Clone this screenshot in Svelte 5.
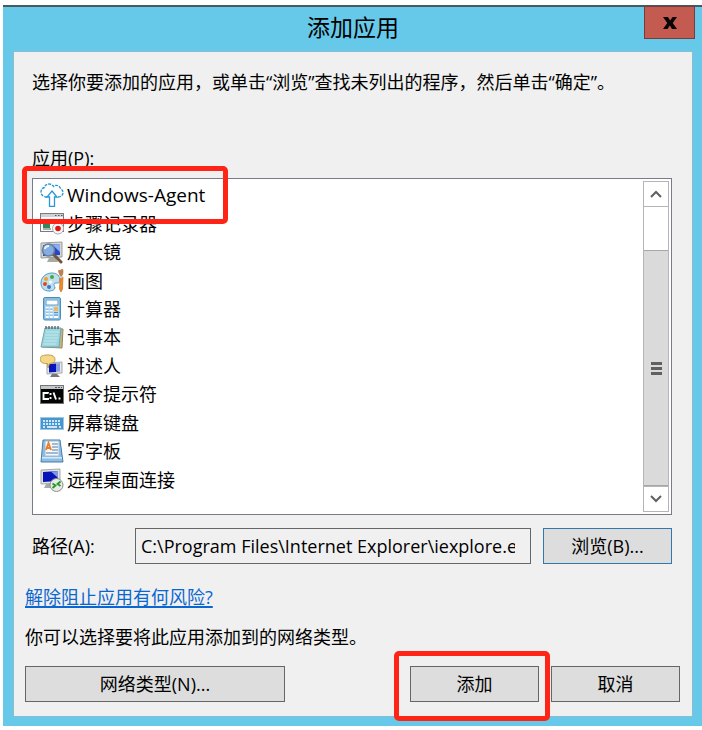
<script lang="ts">
  let apps = [
    { id: 'agent', name: 'Windows-Agent' },
    { id: 'recorder', name: '步骤记录器' },
    { id: 'magnifier', name: '放大镜' },
    { id: 'paint', name: '画图' },
    { id: 'calculator', name: '计算器' },
    { id: 'notepad', name: '记事本' },
    { id: 'narrator', name: '讲述人' },
    { id: 'cmd', name: '命令提示符' },
    { id: 'keyboard', name: '屏幕键盘' },
    { id: 'wordpad', name: '写字板' },
    { id: 'remote', name: '远程桌面连接' }
  ];
  let path: string = 'C:\\Program Files\\Internet Explorer\\iexplore.exe';
  let appList: HTMLElement;

  function scrollApps(amount: number) {
    appList.scrollBy(0, amount);
  }
</script>

<div class="dialog">
  <header class="title-bar">
    <h1>添加应用</h1>
    <button class="close-btn" aria-label="关闭">
      <svg width="16" height="14" viewBox="0 0 16 14">
        <path d="M1 1h5l2.2 3.5L10.500 1H15l-4.300 6L15 13h-5L7.800 9.500 5.500 13H1l4.300-6z" fill="#0a0505" />
      </svg>
    </button>
  </header>

  <main class="panel">
    <section class="fields">
      <p class="intro">选择你要添加的应用，或单击“浏览”查找未列出的程序，然后单击“确定”。</p>

      <h2 id="apps-label">应用(P):</h2>
      <div class="list-box">
        <ul class="apps" aria-labelledby="apps-label" bind:this={appList}>
          {#each apps as app}
            <li class:latin={app.id === 'agent'}>
              <svg width="24" height="24" viewBox="0 0 24 24" aria-hidden="true">
                {#if app.id === 'agent'}
                  <path d="M7 14H5.500C3 13.500 1 11.500 1 9c0-2.500 1.500-4 3.500-4.500C5 2 7 1 9 1c2 0 3.500 1 4.500 2.500C15 2 17 2 18.500 3S20 5 21 6c1.500 1 2 2 2 3.500C23 12 21 14 18.500 14H17" fill="none" stroke="#2795d5" stroke-width="1.300" stroke-dasharray="3 1" />
                  <path d="M12 8l5 6h-2.500v9.300h-5V14H7z" fill="#fff" stroke="#2a98d6" stroke-width="1.300" />
                {:else if app.id === 'recorder'}
                  <rect x=".5" y="1.500" width="23" height="18" fill="#fafafa" stroke="#777c80" />
                  <path d="M1 2h22v3H1z" fill="#cdd2d5" />
                  <path d="M15 3.500h1.500M18 3.500h1.500M21 3.500h1.500" stroke="#555" />
                  <path d="M3 10h7v6H3z" fill="#318957" />
                  <path d="M3 17h8M12 9h8" stroke="#aab1b5" stroke-width="2" />
                  <circle cx="18" cy="16.500" r="5.500" fill="#f8f8f8" stroke="#aaa" />
                  <circle cx="18" cy="16.500" r="2.800" fill="#e01212" />
                {:else if app.id === 'magnifier'}
                  <path d="M1 3l21-1v15L1 18z" fill="#d3d5d3" stroke="#999d9d" />
                  <path d="M3 5l17-1v11L3 16z" fill="#2346cb" />
                  <path d="M12 4.500l8-.5v8z" fill="#91abef" />
                  <path d="M9 18h7l2 4H7z" fill="#aaa99f" />
                  <path d="M13 14l8 8" stroke="#715440" stroke-width="3" stroke-linecap="round" />
                  <circle cx="8.500" cy="10" r="6" fill="#94bfe8" fill-opacity=".85" stroke="#6a7f98" stroke-width="1.500" />
                  <path d="M5 9c0-2 2-3 4-3" fill="none" stroke="#e4f3ff" stroke-width="2" />
                {:else if app.id === 'paint'}
                  <path d="M1 14C1 8 6 4 12 4c5 0 8 3 8 7 0 3-2 3-4 3-3 0-2 3-1 4 0 3-3 4-6 4-5 0-8-3-8-8z" fill="#bfdfef" stroke="#529bc0" />
                  <circle cx="6" cy="10" r="2" fill="#f6a21b" />
                  <circle cx="12" cy="8" r="2" fill="#45a93b" />
                  <circle cx="5" cy="15" r="2" fill="#d94830" />
                  <circle cx="9" cy="18" r="2" fill="#3c75c2" />
                  <circle cx="10.500" cy="13" r="1.500" fill="#fff" />
                  <path d="M20 8h3l-.5 12-1.500 3-1.500-3z" fill="#ef8b21" stroke="#bd651b" stroke-width=".6" />
                  <path d="M18 1c2 1 2-1 5-1 1 3 0 6-1 7h-2c-1-2-2-4-2-6z" fill="#bf8150" />
                  <path d="M19.500 7h3v2h-3z" fill="#cad0d2" />
                {:else if app.id === 'calculator'}
                  <rect x="3.500" y=".5" width="17" height="22.500" rx="1.500" fill="#83bce3" stroke="#4b8ebc" />
                  <rect x="5" y="2" width="14" height="19" fill="#b6dcf3" />
                  <rect x="6" y="3" width="12" height="5" fill="#fff" stroke="#639dc4" />
                  <path d="M6 11h2.500M10 11h2.500M6 14h2.500M10 14h2.500M6 17h2.500M10 17h2.500M6 20h2.500M10 20h2.500M14 20h4" stroke="#fff" stroke-width="2" />
                  <path d="M6 12h2.500M10 12h2.500M6 15h2.500M10 15h2.500M6 18h2.500M10 18h2.500" stroke="#4f91c5" stroke-width=".7" />
                  <path d="M14 10h4v4h-4z" fill="#f4b45c" />
                  <path d="M14 15.500h4M14 18h4" stroke="#4f91c5" />
                {:else if app.id === 'notepad'}
                  <path d="M6 3l17 1-1 19-20-1z" fill="#c8b37b" stroke="#91886a" />
                  <path d="M5 3h16l-2 19H1z" fill="#9bd5de" stroke="#6aaab5" />
                  <path d="M6 7h13M5 10h13M5 13h13M4 16h13M3 19h13" stroke="#c4e8ed" />
                  <path d="M6 4V1M9 4V1M12 4V1M15 4V1M18 4V1" stroke="#555e60" stroke-width="1.300" />
                {:else if app.id === 'narrator'}
                  <path d="M7 9l15-1v11L7 20z" fill="#e5e7ea" stroke="#a3a7aa" />
                  <path d="M9 10l7-.5V18l-7 .5z" fill="#0614ba" />
                  <path d="M16 9.500l4-.5v8.500l-4 .5z" fill="#8b9ddf" />
                  <path d="M12 20h5l3 3H10z" fill="#777" />
                  <path d="M8 1c4 0 7 1 7 4.500S12 9 9.500 9.500L8 14l-.5-4.500C3 10 0 8 0 5s3-4 8-4z" fill="#f4d887" stroke="#c19b49" />
                {:else if app.id === 'cmd'}
                  <rect x=".5" y="3.500" width="23" height="18" fill="#050505" stroke="#74777a" />
                  <path d="M1 4h22v3H1z" fill="#c4c8c9" />
                  <path d="M15 5.500h2M18 5.500h2M21 5.500h1" stroke="#555" />
                  <path d="M8 11.500V11H3.500v6H8v-1M10.500 11v2M10.500 15v2M13.500 10.500l2.500 7M19.500 15.500v2" fill="none" stroke="#fff" stroke-width="1.900" />
                {:else if app.id === 'keyboard'}
                  <rect x=".5" y="6.500" width="23" height="12" fill="#4796d4" stroke="#9fc5df" />
                  <path d="M3 10h18M3 13h18" stroke="#fff" stroke-width="1.700" stroke-dasharray="2 1" />
                  <path d="M3 16h2M7 16h10M19 16h2" stroke="#fff" stroke-width="1.500" />
                {:else if app.id === 'wordpad'}
                  <path d="M3 1h17l3 22H1z" fill="#8fbce2" stroke="#437fac" />
                  <path d="M5 2h14v15H5z" fill="#f4f9fd" stroke="#98bcd3" />
                  <path d="M6 11l2.500-7L11 11M7 9h3" fill="none" stroke="#f27b21" stroke-width="1.800" />
                  <path d="M12 5h6M12 8h6M12 11h6M6 14h12" stroke="#5279a6" stroke-width="1.200" />
                  <path d="M2 18h20v1.500H2z" fill="#d6e9f6" />
                {:else}
                  <path d="M1 2l19-1v14L1 16z" fill="#dfe0df" stroke="#a7aaa7" />
                  <path d="M3 4l15-1v10L3 14z" fill="#0714b7" />
                  <path d="M11 3.500l7-.5v7z" fill="#7d98e7" />
                  <path d="M6 16h6v4H4z" fill="#aaa" />
                  <circle cx="16.500" cy="17" r="6.500" fill="#e8eae5" stroke="#8d918b" />
                  <path d="M12.500 15.500l3 2-3 2.500M20.500 13.500l-3 2.500 3 2" fill="none" stroke="#25962b" stroke-width="1.800" />
                {/if}
              </svg>
              <span>{app.name}</span>
            </li>
          {/each}
        </ul>
        <div class="scrollbar">
          <button aria-label="向上滚动" on:click={() => scrollApps(-28)}>
            <svg width="12" height="8" viewBox="0 0 12 8"><path d="M1 7l5-5 5 5" /></svg>
          </button>
          <div class="track">
            <div class="thumb"><i></i><i></i><i></i></div>
          </div>
          <button aria-label="向下滚动" on:click={() => scrollApps(28)}>
            <svg width="12" height="8" viewBox="0 0 12 8"><path d="M1 1l5 5 5-5" /></svg>
          </button>
        </div>
        <span class="highlight highlight-app"></span>
      </div>

      <div class="path-row">
        <label for="path">路径(A):</label>
        <input id="path" type="text" readonly value={path} />
        <button class="btn focused">浏览(B)...</button>
      </div>
    </section>

    <a class="risk-link" href="#risk">解除阻止应用有何风险?</a>
    <p class="network-hint">你可以选择要将此应用添加到的网络类型。</p>

    <footer class="actions">
      <button class="btn network-btn">网络类型(N)...</button>
      <div class="add-wrap">
        <button class="btn">添加</button>
        <span class="highlight highlight-add"></span>
      </div>
      <button class="btn">取消</button>
    </footer>
  </main>
</div>

<style>
  :global(body) {
    background: #fff;
  }

  .dialog {
    margin: 5px 0 5px 3px;
    padding: 0 9px 9px 10px;
    background: #66c9ea;
    border-top: 2px solid #465a63;
    color: #000;
    font-family: 'Open Sans', 'Noto Sans CJK SC', sans-serif;
    font-size: 18px;
    line-height: 28px;
  }

  h1, h2, p, ul {
    margin: 0;
    padding: 0;
    font-size: 18px;
    font-weight: normal;
  }

  button, input {
    font: inherit;
    color: inherit;
    box-sizing: border-box;
  }

  .title-bar {
    position: relative;
    height: 44px;
    text-align: center;
  }

  .title-bar h1 {
    font-size: 23px;
    line-height: 40px;
  }

  .close-btn {
    position: absolute;
    top: -1px;
    right: -2px;
    display: flex;
    align-items: center;
    justify-content: center;
    width: 51px;
    height: 33px;
    padding: 0;
    border: 1px solid #743e3a;
    background: #c45b50;
  }

  .panel {
    padding: 16px 12px 14px 11px;
    border: 1px solid #8dbccc;
    background: #f0f0f0;
  }

  .fields {
    padding: 0 8px 0 7px;
  }

  .intro {
    margin-bottom: 48px;
  }

  h2 {
    margin-bottom: 6px;
  }

  .list-box {
    position: relative;
    display: flex;
    height: 337px;
    margin-bottom: 13px;
    padding: 2px;
    box-sizing: border-box;
    border: 1px solid #777c88;
    background: #fff;
  }

  .apps {
    flex: 1;
    display: flex;
    flex-direction: column;
    padding: 0 0 18px 5px;
    overflow: auto;
    list-style: none;
  }

  .apps li {
    flex: 1;
    display: flex;
    align-items: center;
    gap: 3px;
  }

  .apps li.latin {
    font-size: 19px;
  }

  .scrollbar {
    display: flex;
    flex-direction: column;
    width: 26px;
    box-sizing: border-box;
    border: 1px solid #b5b5b5;
  }

  .scrollbar button {
    display: flex;
    align-items: center;
    justify-content: center;
    height: 24px;
    padding: 0;
    border: 0;
    background: #fff;
  }

  .scrollbar path {
    fill: none;
    stroke: #606060;
    stroke-width: 2;
  }

  .track {
    flex: 1;
    display: flex;
    padding-top: 43px;
    border: solid #b5b5b5;
    border-width: 1px 0;
  }

  .thumb {
    flex: 1;
    display: flex;
    flex-direction: column;
    align-items: center;
    justify-content: center;
    gap: 2px;
    border: solid #a6a6a6;
    border-width: 1px 0;
    background: #dadada;
  }

  .thumb i {
    width: 11px;
    height: 3px;
    background: #606060;
  }

  .path-row {
    display: flex;
    align-items: center;
    margin-bottom: 19px;
  }

  .path-row label {
    width: 103px;
  }

  .path-row input {
    flex: 1;
    min-width: 0;
    height: 36px;
    margin-right: 12px;
    padding: 0 15px 0 5px;
    border: 1px solid #666;
    border-radius: 0;
    background: #f0f0f0;
    outline: none;
  }

  .btn {
    width: 129px;
    height: 36px;
    padding: 0;
    border: 1px solid #666;
    border-radius: 0;
    background: #ddd;
  }

  .btn.focused {
    border-color: #3378ad;
  }

  .risk-link {
    display: block;
    width: fit-content;
    color: #0b67cf;
    text-decoration-thickness: 2px;
    text-underline-offset: 2px;
  }

  .network-hint {
    margin: 12px 0 15px;
  }

  .actions {
    display: flex;
    gap: 12px;
  }

  .network-btn {
    width: 260px;
    margin-right: auto;
  }

  .add-wrap {
    position: relative;
    display: flex;
  }

  .highlight {
    position: absolute;
    border: 5px solid #ff2415;
    border-radius: 5px;
    pointer-events: none;
  }

  .highlight-app {
    top: -13px;
    left: -11px;
    width: 196px;
    height: 48px;
  }

  .highlight-add {
    inset: -15px -11px -19px -16px;
  }
</style>
